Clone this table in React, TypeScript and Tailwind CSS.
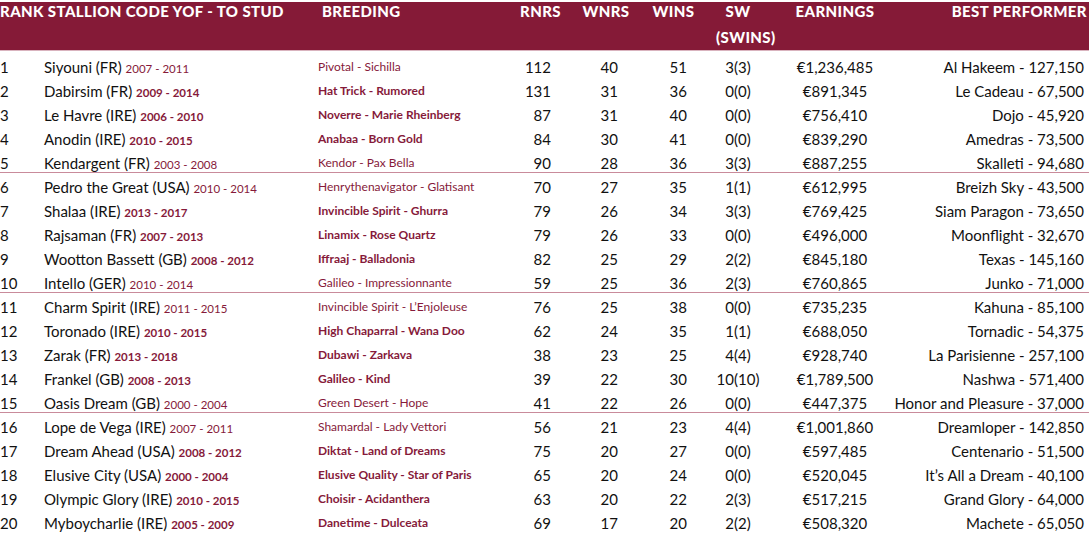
import React from "react"

type Row = {
  rank: number
  name: string
  years: string
  breeding: string
  rnrs: number
  wnrs: number
  wins: number
  sw: string
  earnings: string
  best: string
  strong: boolean
}

const rows: Row[] = [
  { rank: 1, name: "Siyouni (FR)", years: "2007 - 2011", breeding: "Pivotal - Sichilla", rnrs: 112, wnrs: 40, wins: 51, sw: "3(3)", earnings: "€1,236,485", best: "Al Hakeem - 127,150", strong: false },
  { rank: 2, name: "Dabirsim (FR)", years: "2009 - 2014", breeding: "Hat Trick - Rumored", rnrs: 131, wnrs: 31, wins: 36, sw: "0(0)", earnings: "€891,345", best: "Le Cadeau - 67,500", strong: true },
  { rank: 3, name: "Le Havre (IRE)", years: "2006 - 2010", breeding: "Noverre - Marie Rheinberg", rnrs: 87, wnrs: 31, wins: 40, sw: "0(0)", earnings: "€756,410", best: "Dojo - 45,920", strong: true },
  { rank: 4, name: "Anodin (IRE)", years: "2010 - 2015", breeding: "Anabaa - Born Gold", rnrs: 84, wnrs: 30, wins: 41, sw: "0(0)", earnings: "€839,290", best: "Amedras - 73,500", strong: true },
  { rank: 5, name: "Kendargent (FR)", years: "2003 - 2008", breeding: "Kendor - Pax Bella", rnrs: 90, wnrs: 28, wins: 36, sw: "3(3)", earnings: "€887,255", best: "Skalleti - 94,680", strong: false },
  { rank: 6, name: "Pedro the Great (USA)", years: "2010 - 2014", breeding: "Henrythenavigator - Glatisant", rnrs: 70, wnrs: 27, wins: 35, sw: "1(1)", earnings: "€612,995", best: "Breizh Sky - 43,500", strong: false },
  { rank: 7, name: "Shalaa (IRE)", years: "2013 - 2017", breeding: "Invincible Spirit - Ghurra", rnrs: 79, wnrs: 26, wins: 34, sw: "3(3)", earnings: "€769,425", best: "Siam Paragon - 73,650", strong: true },
  { rank: 8, name: "Rajsaman (FR)", years: "2007 - 2013", breeding: "Linamix - Rose Quartz", rnrs: 79, wnrs: 26, wins: 33, sw: "0(0)", earnings: "€496,000", best: "Moonflight - 32,670", strong: true },
  { rank: 9, name: "Wootton Bassett (GB)", years: "2008 - 2012", breeding: "Iffraaj - Balladonia", rnrs: 82, wnrs: 25, wins: 29, sw: "2(2)", earnings: "€845,180", best: "Texas - 145,160", strong: true },
  { rank: 10, name: "Intello (GER)", years: "2010 - 2014", breeding: "Galileo - Impressionnante", rnrs: 59, wnrs: 25, wins: 36, sw: "2(3)", earnings: "€760,865", best: "Junko - 71,000", strong: false },
  { rank: 11, name: "Charm Spirit (IRE)", years: "2011 - 2015", breeding: "Invincible Spirit - L’Enjoleuse", rnrs: 76, wnrs: 25, wins: 38, sw: "0(0)", earnings: "€735,235", best: "Kahuna - 85,100", strong: false },
  { rank: 12, name: "Toronado (IRE)", years: "2010 - 2015", breeding: "High Chaparral - Wana Doo", rnrs: 62, wnrs: 24, wins: 35, sw: "1(1)", earnings: "€688,050", best: "Tornadic - 54,375", strong: true },
  { rank: 13, name: "Zarak (FR)", years: "2013 - 2018", breeding: "Dubawi - Zarkava", rnrs: 38, wnrs: 23, wins: 25, sw: "4(4)", earnings: "€928,740", best: "La Parisienne - 257,100", strong: true },
  { rank: 14, name: "Frankel (GB)", years: "2008 - 2013", breeding: "Galileo - Kind", rnrs: 39, wnrs: 22, wins: 30, sw: "10(10)", earnings: "€1,789,500", best: "Nashwa - 571,400", strong: true },
  { rank: 15, name: "Oasis Dream (GB)", years: "2000 - 2004", breeding: "Green Desert - Hope", rnrs: 41, wnrs: 22, wins: 26, sw: "0(0)", earnings: "€447,375", best: "Honor and Pleasure - 37,000", strong: false },
  { rank: 16, name: "Lope de Vega (IRE)", years: "2007 - 2011", breeding: "Shamardal - Lady Vettori", rnrs: 56, wnrs: 21, wins: 23, sw: "4(4)", earnings: "€1,001,860", best: "Dreamloper - 142,850", strong: false },
  { rank: 17, name: "Dream Ahead (USA)", years: "2008 - 2012", breeding: "Diktat - Land of Dreams", rnrs: 75, wnrs: 20, wins: 27, sw: "0(0)", earnings: "€597,485", best: "Centenario - 51,500", strong: true },
  { rank: 18, name: "Elusive City (USA)", years: "2000 - 2004", breeding: "Elusive Quality - Star of Paris", rnrs: 65, wnrs: 20, wins: 24, sw: "0(0)", earnings: "€520,045", best: "It’s All a Dream - 40,100", strong: true },
  { rank: 19, name: "Olympic Glory (IRE)", years: "2010 - 2015", breeding: "Choisir - Acidanthera", rnrs: 63, wnrs: 20, wins: 22, sw: "2(3)", earnings: "€517,215", best: "Grand Glory - 64,000", strong: true },
  { rank: 20, name: "Myboycharlie (IRE)", years: "2005 - 2009", breeding: "Danetime - Dulceata", rnrs: 69, wnrs: 17, wins: 20, sw: "2(2)", earnings: "€508,320", best: "Machete - 65,050", strong: true },
]

// rank | stallion | breeding | rnrs | wnrs | wins | sw | earnings | best performer
const cols = "grid grid-cols-[44px_274px_182px_81px_50px_85px_44px_150px_minmax(0,1fr)]"

export default function App() {
  return (
    <div className="w-[1089px] h-[552px] bg-white overflow-hidden font-['Lato',sans-serif] text-[#111]">
      {/* Header */}
      <div className={`${cols} mt-[2px] h-[49px] bg-[#851a37] border-b border-[#d9b3be] text-white text-[15px] font-black uppercase leading-[26px] tracking-[0.4px]`}>
        <div className="col-span-2 -mt-[4px] whitespace-nowrap">Rank Stallion Code YOF - To Stud</div>
        <div className="-mt-[4px] pl-[4px]">Breeding</div>
        <div className="-mt-[4px] text-center">RNRS</div>
        <div className="-mt-[4px] text-center">WNRS</div>
        <div className="-mt-[4px] text-center">WINS</div>
        <div className="-mt-[4px] text-center whitespace-nowrap">
          SW
          <br />
          (SWINS)
        </div>
        <div className="-mt-[4px] text-center">Earnings</div>
        <div className="-mt-[4px] flex justify-end pr-[2px] whitespace-nowrap">Best Performer</div>
      </div>

      {/* Rows */}
      <div className="mt-[4px]">
        {rows.map((r) => (
          <div key={r.rank} className={`${cols} relative h-[24px] items-center text-[15px] whitespace-nowrap`}>
            <div>{r.rank}</div>
            <div>
              {r.name}{" "}
              <span className={`text-[11.5px] text-[#861a3a] ${r.strong ? "font-bold" : "font-normal"}`}>{r.years}</span>
            </div>
            <div className={`text-[12px] text-[#861a3a] ${r.strong ? "font-bold" : "font-normal"}`}>{r.breeding}</div>
            <div className="text-right pr-[30px]">{r.rnrs}</div>
            <div className="text-right pr-[13px]">{r.wnrs}</div>
            <div className="text-right pr-[29px]">{r.wins}</div>
            <div className="text-center">{r.sw}</div>
            <div className="text-center">{r.earnings}</div>
            <div className="flex justify-end pr-[5px]">{r.best}</div>
            {r.rank % 5 === 0 && r.rank < 20 && (
              <span className="absolute left-0 right-0 bottom-[2px] h-px bg-[#c98b9b]" />
            )}
          </div>
        ))}
      </div>
    </div>
  )
}
